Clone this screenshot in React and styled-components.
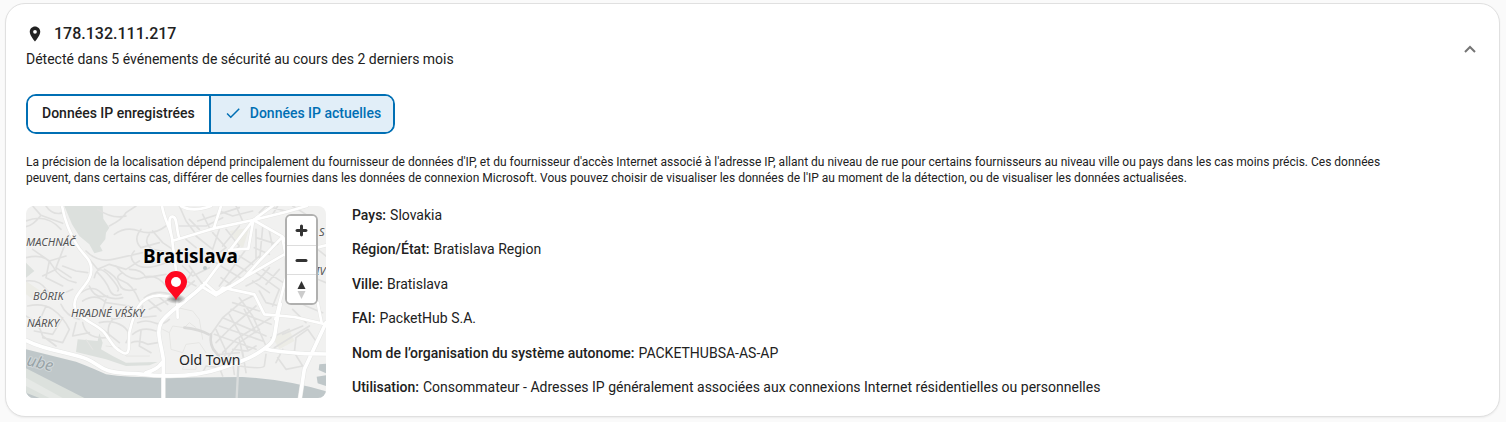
import React, { useState } from "react";
import styled, { createGlobalStyle, css } from "styled-components";

const GlobalStyle = createGlobalStyle`
  *, *::before, *::after { box-sizing: border-box; }
  body {
    margin: 0;
    background: #fafafa;
    color: #212121;
    font-family: Roboto, "Liberation Sans", sans-serif;
    font-size: 14px;
    line-height: 20px;
  }
`;

const Card = styled.section`
  margin: 3px 6px 4px 5px;
  padding: 20px;
  padding-bottom: 18px;
  background: #fff;
  border: 1px solid #e0e0e0;
  border-radius: 20px;
  box-shadow: 0 1px 2px rgba(0, 0, 0, 0.06);
`;

const Header = styled.header`
  display: flex;
  align-items: center;
  justify-content: space-between;
`;

const Heading = styled.div`
  display: flex;
  flex-direction: column;
  gap: 5px;
`;

const IpTitle = styled.h2`
  display: flex;
  align-items: center;
  gap: 10px;
  margin: 0;
  font-size: 16px;
  font-weight: 500;
  line-height: 20px;

  svg { width: 18px; height: 18px; }
`;

const Subtitle = styled.p`
  margin: 0;
`;

const CollapseButton = styled.button`
  display: flex;
  padding: 0;
  border: 0;
  background: none;
  color: #757575;
  cursor: pointer;

  svg { width: 20px; height: 20px; }
`;

const ToggleGroup = styled.div`
  display: inline-flex;
  height: 40px;
  margin-top: 25px;
  overflow: hidden;
  border: 2px solid #006fb4;
  border-radius: 10px;
`;

const ToggleButton = styled.button`
  display: flex;
  align-items: center;
  gap: 8px;
  padding: 0 14px 2px;
  border: 0;
  background: #fff;
  color: #212121;
  font: inherit;
  font-weight: 500;
  cursor: pointer;

  & + & { border-left: 2px solid #006fb4; }

  svg { width: 18px; height: 18px; }

  ${({ $selected }) => $selected && css`
    padding: 0 12px 2px 13px;
    background: #e1eef8;
    color: #006fb4;
  `}
`;

const Notice = styled.p`
  margin: 20px 0;
  padding-right: 60px;
  font-size: 12px;
  line-height: 16px;
`;

const Body = styled.div`
  display: flex;
  gap: 26px;
`;

const MapFrame = styled.div`
  position: relative;
  flex: none;
  width: 300px;
  height: 192px;
  overflow: hidden;
  border-radius: 8px;
  background: #f1f1f0;
`;

const MapDrawing = styled.svg`
  display: block;
  width: 100%;
  height: 100%;
  fill: none;
  stroke-linecap: round;
  stroke-linejoin: round;
`;

const MapLabel = styled.text`
  font-family: "Noto Sans", sans-serif;
  font-size: ${({ $size }) => $size}px;
  font-weight: ${({ $weight }) => $weight || 400};
  font-style: ${({ $italic }) => ($italic ? "italic" : "normal")};
  fill: ${({ $color }) => $color || "#555"};
  stroke: ${({ $halo }) => $halo || "#f4f4f3"};
  stroke-width: 2px;
  paint-order: stroke;
`;

const MapControls = styled.div`
  position: absolute;
  top: 8px;
  right: 8px;
  display: flex;
  flex-direction: column;
  width: 33px;
  overflow: hidden;
  border: 2px solid #b0b0af;
  border-radius: 6px;
  background: #fff;
`;

const MapButton = styled.button`
  display: flex;
  align-items: center;
  justify-content: center;
  height: 29px;
  padding: 0;
  border: 0;
  background: #fff;
  cursor: pointer;

  & + & { border-top: 1px solid #ddd; }

  svg { width: 29px; height: 29px; }
`;

const Details = styled.dl`
  display: flex;
  flex: 1;
  flex-direction: column;
  justify-content: space-between;
  margin: 0;
  padding-bottom: 2px;
  line-height: 18px;
`;

const Detail = styled.div`
  display: flex;
  gap: 4px;

  dt { font-weight: 500; }
  dd { margin: 0; }
`;

const details = [
  ["Pays:", "Slovakia"],
  ["Région/État:", "Bratislava Region"],
  ["Ville:", "Bratislava"],
  ["FAI:", "PacketHub S.A."],
  ["Nom de l’organisation du système autonome:", "PACKETHUBSA-AS-AP"],
  ["Utilisation:", "Consommateur - Adresses IP généralement associées aux connexions Internet résidentielles ou personnelles"],
];

const modes = ["Données IP enregistrées", "Données IP actuelles"];

const lanes = [
  "M0 45 Q60 20 105 70", "M20 0 L45 28 L110 52", "M45 28 Q20 60 0 62", "M60 0 Q80 30 112 20",
  "M0 155 Q60 140 80 180 T150 230", "M20 130 L70 165 L120 150", "M70 165 L60 215 L110 240", "M115 120 L90 185 L135 215",
  "M0 225 Q40 220 60 250 T140 250", "M50 210 L90 190", "M110 180 L150 195 L185 200",
  "M5 300 Q50 290 80 310 T130 370", "M0 330 Q40 350 50 390 L90 420", "M60 300 L40 345", "M105 295 Q120 330 160 340",
  "M110 335 L80 385 L25 375", "M130 370 L110 410 L50 395", "M150 350 L140 390 L190 380", "M170 350 Q180 400 240 395",
  "M250 60 Q290 40 300 20 L330 0", "M265 85 Q300 60 340 75 T420 60", "M215 10 Q260 40 300 30",
  "M180 135 Q215 170 260 160 T350 140", "M190 160 L215 190 L250 175 L300 190 L340 165", "M205 215 Q215 170 250 210 T275 255",
  "M215 200 Q240 225 250 250 T285 265", "M235 190 Q270 210 280 235 T330 250", "M270 180 Q310 230 350 215 T420 240",
  "M290 200 Q260 215 290 225 T340 285", "M310 190 Q350 190 360 215 L420 205", "M325 135 Q305 155 330 175 T420 170",
  "M345 70 Q320 100 345 125 L400 110", "M370 85 Q350 110 380 130 L430 140", "M380 75 L410 110 L440 130",
  "M165 260 Q200 235 225 260 T290 275", "M170 285 Q210 260 240 290 L310 300", "M190 240 Q205 280 245 270",
  "M240 280 L230 310 L260 340 L310 330", "M220 350 Q260 340 290 360 T300 410", "M230 370 L280 410", "M260 340 Q240 365 250 390",
  "M350 300 L340 335 L390 330", "M335 350 Q360 340 385 350 T430 340", "M320 385 Q350 360 390 375",
  "M315 410 Q340 400 365 415 L395 410", "M345 375 L340 420 L375 440",
  "M355 275 Q390 250 435 265", "M365 280 L405 315", "M390 265 L425 295", "M370 310 L430 280",
  "M460 0 L480 45 L510 85", "M460 60 L540 60 L590 35", "M490 40 L520 70", "M530 25 L555 75", "M515 45 L640 5",
  "M580 15 L620 30 L680 15", "M630 0 L650 45", "M600 70 L640 120 L600 160", "M560 80 L600 125 L560 155", "M510 90 L560 130",
  "M480 100 L510 125", "M580 70 L560 130", "M640 60 L590 120", "M690 70 L690 160", "M710 65 L700 170", "M730 75 L740 125",
  "M690 95 L755 115", "M685 125 L730 145", "M640 150 L680 175", "M620 170 L660 195", "M600 190 L650 220", "M585 215 L620 240",
  "M660 130 L580 240", "M700 150 L590 250", "M540 150 L600 190", "M470 180 L500 210 L550 185", "M490 180 L530 235",
  "M470 220 L510 240", "M480 245 L505 225", "M500 195 L475 235", "M700 20 L720 0 L790 18", "M740 25 L755 0", "M800 0 L840 25",
  "M690 200 L760 250 L740 300", "M710 190 L780 235", "M680 225 L730 260", "M660 240 L700 220 L730 185", "M720 235 L760 190",
  "M700 255 L720 290 L760 300", "M780 265 L840 300 L890 320", "M800 310 L840 350", "M875 130 L900 150", "M875 220 L900 230",
  "M555 385 L590 335 L650 285 L680 270", "M570 410 L620 360 L690 300", "M590 440 L630 400 L735 335", "M600 460 L640 410 L700 370",
  "M590 335 L720 390", "M615 310 L735 355", "M580 360 L710 405", "M565 385 L690 430", "M620 290 L700 315",
  "M640 275 L680 330 L720 420", "M610 325 L640 380 L665 430", "M655 310 L690 380", "M570 370 L600 435 L590 480",
  "M640 400 L655 470", "M620 430 L665 435 L690 420", "M580 445 L640 440", "M530 500 L540 480 L580 485 L590 510",
  "M620 470 L625 505", "M650 440 L660 500", "M590 485 L650 470", "M720 445 L715 480 Q710 490 640 480",
  "M745 425 L850 360", "M750 470 L770 430", "M770 385 L830 360", "M805 440 L830 480 L780 490 L755 455",
  "M805 440 L810 395 L845 370 L870 405", "M735 395 L790 370",
];

const footpaths = "M410 370 L430 380 L440 360 L475 365 L490 350 L510 365 M430 380 L435 430 L470 440 L480 415 L520 410 L540 440 M455 305 L500 315 L520 340 L530 400 M180 400 L200 430 M240 420 L280 425 L300 450 L370 450 M470 490 L510 490 L510 470 L480 470 Z";

const roads = [
  "M108 0 C118 50 130 75 150 112 S195 155 196 190 S165 245 150 275 C142 295 145 310 155 320",
  "M155 320 C180 350 215 355 235 380 S260 425 290 440 Q305 448 308 430 L310 380 C325 315 340 270 400 268 L450 275",
  "M408 0 C415 45 440 75 440 115 L451 200 L455 335",
  "M438 105 L560 68 L682 42 L780 18 L842 0",
  "M740 0 L682 42 L602 145 L535 235 L455 305",
  "M585 0 L563 68",
  "M440 105 C430 60 425 30 440 32 S450 70 460 97",
  "M465 0 Q500 20 555 0",
  "M682 42 L770 92 L782 110",
  "M682 42 L667 128 L610 132",
  "M770 92 L700 165 L650 220 L575 265 L535 230",
  "M775 145 L660 212 L615 240 L575 258",
  "M525 240 L570 268 L590 245 L685 265 L715 325 L805 333 L900 355",
  "M782 100 L780 215 L748 340",
  "M770 100 L784 175",
  "M872 125 L900 118",
  "M875 290 L887 350",
];

const arterials = [
  "M0 403 C60 435 140 440 185 460 S215 500 330 503 C430 515 520 510 585 487 S670 460 715 428 S738 390 763 295",
  "M715 428 Q730 435 835 443 L900 444",
  "M900 350 L835 490 L822 576",
  "M530 240 C490 280 420 320 405 350 S405 410 412 460 L412 576",
  "M360 500 Q395 490 408 470",
];

function PlaceIcon() {
  return (
    <svg viewBox="0 0 24 24" fill="currentColor" aria-hidden="true">
      <path d="M12 2C8.13 2 5 5.13 5 9c0 5.25 7 13 7 13s7-7.75 7-13c0-3.87-3.13-7-7-7zm0 9.5a2.5 2.5 0 1 1 0-5 2.5 2.5 0 0 1 0 5z" />
    </svg>
  );
}

function BratislavaMap() {
  return (
    <MapFrame>
      <MapDrawing viewBox="0 0 300 192" role="img" aria-label="Carte de Bratislava">
        <defs>
          <radialGradient id="pin-shadow">
            <stop offset="0" stopColor="#000" stopOpacity="0.5" />
            <stop offset="1" stopColor="#000" stopOpacity="0" />
          </radialGradient>
        </defs>
        <g transform="scale(0.333333)">
          <path fill="#dce0dd" d="M115 0 L230 0 L232 38 L250 65 L240 80 L238 100 L222 120 L230 135 L205 142 L190 115 L160 90 L138 55 Z" />
          <path fill="#dce0dd" d="M0 170 L25 195 L0 215 Z M155 400 L215 405 L220 382 L230 410 L225 430 L260 450 L300 470 L395 468 L370 478 L300 480 L240 460 L150 438 Z" />
          <path fill="#ecece6" d="M0 225 L65 270 L20 280 L0 265 Z M740 395 L790 370 L805 405 L760 430 Z M610 75 L670 65 L650 130 Z" />
          <path stroke="#e0e0df" strokeWidth="5" d={lanes.join(" ")} />
          <path stroke="#e6e6e4" strokeWidth="3" d={footpaths} />
          <path stroke="#dadad9" strokeWidth="8" d="M475 365 Q520 370 548 385 M555 385 Q550 420 570 440 L590 465" />
          <path fill="#bfc7c9" d="M0 430 L150 467 Q210 490 240 505 Q300 515 420 515 L650 513 Q780 520 900 556 L900 576 L0 576 Z" />
          <path fill="#dce1dd" d="M0 487 L175 576 L0 576 Z" />
          <path fill="#e6e9e6" d="M0 515 L110 576 L70 576 L0 540 Z" />
          <path fill="#bfc7c9" d="M0 560 L40 576 L0 576 Z M880 475 L900 473 L900 502 L878 492 Z M872 512 L900 508 L900 540 L875 532 Z" />
          <path stroke="#d9dcdc" strokeWidth="7" d="M637 480 L632 576" />
          <path stroke="#e6e6e4" strokeWidth="11" d={roads.join(" ")} />
          <path stroke="#e4e5e4" strokeWidth="14" d={arterials.join(" ")} />
          <path stroke="#fff" strokeWidth="8" d={roads.join(" ")} />
          <path stroke="#fff" strokeWidth="11" d={arterials.join(" ")} />
          <circle cx="537" cy="186" r="6" fill="#bfc9ca" />
        </g>
        <MapLabel x="0" y="40" $size={11} $italic>MACHNÁČ</MapLabel>
        <MapLabel x="7" y="94" $size={11} $italic>BÔRIK</MapLabel>
        <MapLabel x="1" y="121" $size={11} $italic>NÁRKY</MapLabel>
        <MapLabel x="45" y="111" $size={11} $italic>HRADNÉ VŔŠKY</MapLabel>
        <MapLabel x="293" y="30" $size={11} $italic>S</MapLabel>
        <MapLabel x="290" y="69" $size={11} $italic>IV</MapLabel>
        <MapLabel x="0" y="159" $size={16} $italic $color="#98a3a7" $halo="#d2d8da" transform="rotate(14 0 159)">ube</MapLabel>
        <MapLabel x="117" y="57" $size={19} $weight={700} $color="#000">Bratislava</MapLabel>
        <MapLabel x="153" y="159" $size={14} $color="#222">Old Town</MapLabel>
        <ellipse cx="150" cy="93" rx="10" ry="5" fill="url(#pin-shadow)" />
        <path fill="#ff0820" d="M150 94 C147 88 139 83 139 76 A11 11 0 0 1 161 76 C161 83 153 88 150 94 Z" />
        <circle cx="150" cy="76" r="5" fill="#fff" />
      </MapDrawing>
      <MapControls>
        <MapButton type="button" aria-label="Zoom avant">
          <svg viewBox="0 0 29 29" fill="#333">
            <path d="M14.5 8.5c-.75 0-1.5.75-1.5 1.5v3h-3c-.75 0-1.5.75-1.5 1.5S9.250 16 10 16h3v3c0 .75.75 1.500 1.500 1.500S16 19.750 16 19v-3h3c.75 0 1.500-.75 1.500-1.500S19.750 13 19 13h-3v-3c0-.75-.75-1.500-1.500-1.500z" />
          </svg>
        </MapButton>
        <MapButton type="button" aria-label="Zoom arrière">
          <svg viewBox="0 0 29 29" fill="#333">
            <rect x="8.500" y="13" width="12" height="3" rx="1.500" />
          </svg>
        </MapButton>
        <MapButton type="button" aria-label="Orienter vers le nord">
          <svg viewBox="0 0 29 29">
            <path fill="#333" d="m10.500 14 4-8 4 8z" />
            <path fill="#ccc" d="m10.500 16 4 8 4-8z" />
          </svg>
        </MapButton>
      </MapControls>
    </MapFrame>
  );
}

export default function App() {
  const [mode, setMode] = useState(1);
  return (
    <>
      <GlobalStyle />
      <Card>
        <Header>
          <Heading>
            <IpTitle><PlaceIcon />178.132.111.217</IpTitle>
            <Subtitle>Détecté dans 5 événements de sécurité au cours des 2 derniers mois</Subtitle>
          </Heading>
          <CollapseButton type="button" aria-label="Réduire">
            <svg viewBox="0 0 20 20" fill="none" stroke="currentColor" strokeWidth="2">
              <path d="M6 15 L11 10 L16 15" />
            </svg>
          </CollapseButton>
        </Header>
        <ToggleGroup role="group" aria-label="Source des données IP">
          {modes.map((label, i) => (
            <ToggleButton key={label} type="button" $selected={mode === i} aria-pressed={mode === i} onClick={() => setMode(i)}>
              {mode === i && (
                <svg viewBox="0 0 24 24" fill="currentColor" aria-hidden="true">
                  <path d="M9 16.170 4.830 12l-1.420 1.410L9 19 21 7l-1.410-1.410z" />
                </svg>
              )}
              {label}
            </ToggleButton>
          ))}
        </ToggleGroup>
        <Notice>
          La précision de la localisation dépend principalement du fournisseur de données d'IP, et du fournisseur d'accès Internet associé à l'adresse IP, allant du niveau de rue pour certains fournisseurs au niveau ville ou pays dans les cas moins précis. Ces données peuvent, dans certains cas, différer de celles fournies dans les données de connexion Microsoft. Vous pouvez choisir de visualiser les données de l'IP au moment de la détection, ou de visualiser les données actualisées.
        </Notice>
        <Body>
          <BratislavaMap />
          <Details>
            {details.map(([term, value]) => (
              <Detail key={term}>
                <dt>{term}</dt>
                <dd>{value}</dd>
              </Detail>
            ))}
          </Details>
        </Body>
      </Card>
    </>
  );
}
